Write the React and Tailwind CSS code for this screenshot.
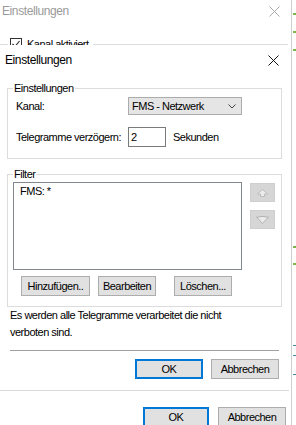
import React from "react";

const F = { fontFamily: '"Liberation Sans", Arial, sans-serif' };

function XIcon({ color }) {
  return (
    <svg width="11" height="11" viewBox="0 0 11 11">
      <path d="M0.5 0.5 L10.5 10.5 M10.5 0.5 L0.5 10.5" stroke={color} strokeWidth="1" fill="none" />
    </svg>
  );
}

function Btn({ w, children, primary }) {
  return (
    <div
      className={
        "h-[20px] flex items-center justify-center bg-[#e1e1e1] text-[11px] tracking-[-0.5px] text-black " +
        (primary ? "border-2 border-[#0078d7]" : "border border-[#adadad]")
      }
      style={{ width: w }}
    >
      {children}
    </div>
  );
}

export default function App() {
  return (
    <div className="relative w-[296px] h-[425px] bg-white overflow-hidden flex text-black" style={F}>
      {/* back dialog */}
      <div className="w-[292px] h-full border-r border-[#cfcfcf] flex flex-col">
        <div className="h-[22px] flex items-center justify-between pl-[2px] pr-[11px]">
          <span className="text-[12px] tracking-[-0.4px] text-[#9a9a9a]">Einstellungen</span>
          <XIcon color="#a8a8a8" />
        </div>
        <div className="mt-[14px] h-[16px] flex items-center pr-[3px]">
          <div className="w-[8px] h-px bg-[#dcdcdc]" />
          <div className="ml-[2px] w-[12px] h-[12px] border border-[#333] flex items-center justify-center">
            <svg width="10" height="10" viewBox="0 0 10 10">
              <path d="M1.5 5 L4 7.5 L8.5 2" stroke="#222" strokeWidth="1.1" fill="none" />
            </svg>
          </div>
          <span className="ml-[5px] text-[11px] tracking-[-0.5px]">Kanal aktiviert</span>
          <div className="ml-[4px] flex-1 h-px bg-[#dcdcdc]" />
        </div>
        <div className="flex-1" />
        <div className="flex justify-end gap-[9px] pr-[5px] mb-[-2px]">
          <Btn w={66} primary>OK</Btn>
          <Btn w={68}>Abbrechen</Btn>
        </div>
      </div>
      <div className="flex-1 relative">
        <div className="absolute left-[1px] top-[13px] w-[3px] h-[2px] bg-[#7ab648]" />
        <div className="absolute left-[1px] top-[31px] w-[3px] h-[2px] bg-[#7ab648]" />
        <div className="absolute left-[1px] top-[49px] w-[3px] h-[2px] bg-[#7ab648]" />
        <div className="absolute left-[1px] top-[246px] w-[3px] h-[2px] bg-[#7ab648]" />
        <div className="absolute left-[1px] top-[263px] w-[3px] h-[2px] bg-[#7ab648]" />
        <div className="absolute left-[1px] top-[345px] w-[3px] h-px bg-[#4a8aa8]" />
        <div className="absolute left-[1px] top-[355px] w-[3px] h-px bg-[#4a8aa8]" />
        <div className="absolute left-[1px] top-[374px] w-[3px] h-px bg-[#4a8aa8]" />
      </div>

      {/* front dialog */}
      <div className="absolute left-0 top-[45px] w-[289px] h-[346px] bg-white border-b border-[#d9d9d9] flex flex-col">
        <div className="h-[30px] flex items-center justify-between pl-[5px] pr-[10px]">
          <span className="text-[12px] tracking-[-0.4px]">Einstellungen</span>
          <XIcon color="#111" />
        </div>

        <fieldset className="mt-[7px] ml-[7px] w-[275px] border border-[#dcdcdc] px-[8px] pb-[11px] text-[11px] tracking-[-0.5px]">
          <legend className="-ml-[3px] px-[1px] leading-[13px]">Einstellungen</legend>
          <div className="h-[22px] flex items-center">
            <span className="w-[112px]">Kanal:</span>
            <div className="w-[114px] h-[18px] bg-[#e5e5e5] border border-[#acacac] flex items-center justify-between pl-[3px] pr-[5px]">
              <span>FMS - Netzwerk</span>
              <svg width="8" height="5" viewBox="0 0 8 5">
                <path d="M0.5 0.5 L4 4 L7.5 0.5" stroke="#444" strokeWidth="1" fill="none" />
              </svg>
            </div>
          </div>
          <div className="mt-[10px] h-[20px] flex items-center">
            <span className="w-[112px]">Telegramme verzögern:</span>
            <div className="w-[38px] h-[20px] border border-[#7a7a7a] flex items-center pl-[2px]">2</div>
            <span className="ml-[7px]">Sekunden</span>
          </div>
        </fieldset>

        <fieldset className="mt-[9px] ml-[7px] w-[275px] border border-[#dcdcdc] pl-[5px] pb-[10px] text-[11px] tracking-[-0.5px]">
          <legend className="px-[1px] leading-[13px]">Filter</legend>
          <div className="mt-[1px] flex">
            <div className="w-[229px] h-[88px] border border-[#828790] pl-[6px] pt-[1px] leading-[14px]">FMS: *</div>
            <div className="ml-[8px] mt-[1px] flex flex-col gap-[8px]">
              <div className="w-[25px] h-[19px] bg-[#d6d6d6] border border-[#cfcfcf] flex items-center justify-center">
                <svg width="11" height="8" viewBox="0 0 11 8">
                  <path d="M5.5 0.5 L10.5 5 H7.5 V7.5 H3.5 V5 H0.5 Z" fill="#ebebeb" stroke="#b5b5b5" strokeWidth="0.8" />
                </svg>
              </div>
              <div className="w-[25px] h-[19px] bg-[#d6d6d6] border border-[#cfcfcf] flex items-center justify-center">
                <svg width="13" height="8" viewBox="0 0 13 8">
                  <path d="M0.5 1 H4.5 V0.5 H8.5 V1 H12.5 L6.5 7.5 Z" fill="#ebebeb" stroke="#a8a8a8" strokeWidth="0.8" />
                </svg>
              </div>
            </div>
          </div>
          <div className="mt-[6px] ml-[8px] flex">
            <Btn w={69}>Hinzufügen..</Btn>
            <div className="ml-[8px]"><Btn w={58}>Bearbeiten</Btn></div>
            <div className="ml-[18px]"><Btn w={58}>Löschen...</Btn></div>
          </div>
        </fieldset>

        <div className="pl-[10px] text-[11px] tracking-[-0.5px] leading-[17px]">
          Es werden alle Telegramme verarbeitet die nicht
          <br />
          verboten sind.
        </div>
        <div className="mt-[9px] mx-[10px] h-px bg-[#a0a0a0]" />
        <div className="mt-[8px] flex justify-end gap-[8px] pr-[10px]">
          <Btn w={68} primary>OK</Btn>
          <Btn w={68}>Abbrechen</Btn>
        </div>
      </div>
    </div>
  );
}
